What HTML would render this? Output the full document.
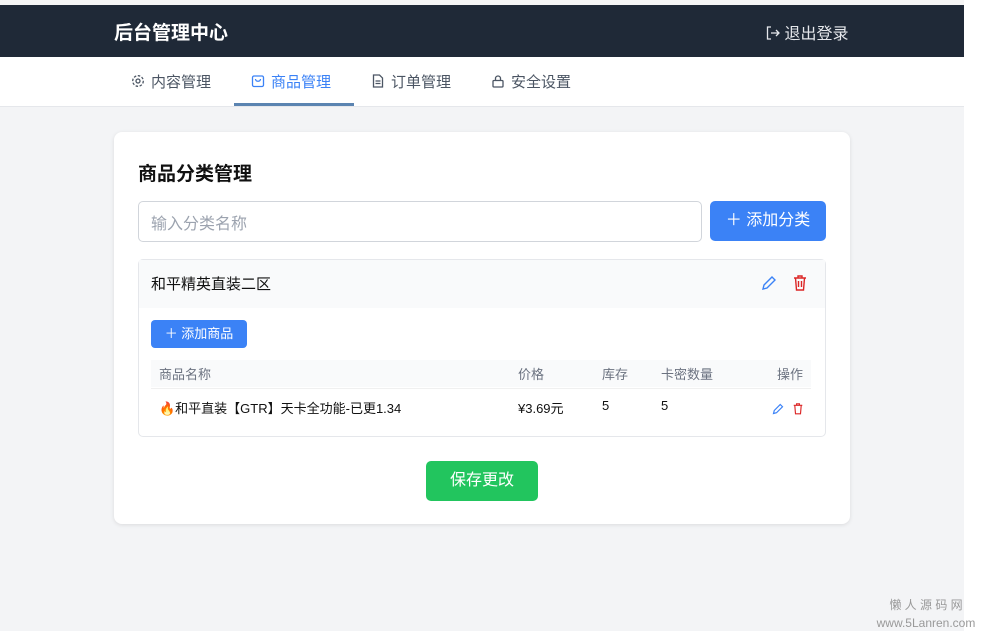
<!DOCTYPE html>
<html><head><meta charset="utf-8"><style>
*{box-sizing:border-box;margin:0;padding:0}
body{width:981px;height:631px;overflow:hidden;background:#fff;font-family:"Liberation Sans","Noto Sans CJK SC",sans-serif;position:relative}
.page{position:absolute;left:0;top:0;width:964px;height:631px;background:#f3f4f6}
.top{position:absolute;left:0;top:0;width:964px;height:5px;background:#f5f5f5}
.hdr{position:absolute;left:0;top:5px;width:964px;height:52px;background:#1f2937;color:#fff}
.hdr .t{position:absolute;left:114px;top:13px;font-size:19px;font-weight:bold}
.hdr .o{position:absolute;left:766px;top:15px;font-size:16px;color:#e5e7eb}
.nav{position:absolute;left:0;top:57px;width:964px;height:50px;background:#fff;border-bottom:1px solid #e5e7eb}
.nav div{position:absolute;top:14px;font-size:15px;color:#4b5563}
.nav svg{margin-right:6px}
.nav .a{color:#3b82f6}
.ul{position:absolute;left:234px;top:103px;width:120px;height:3px;background:#5b84b1}
.card{position:absolute;left:114px;top:132px;width:736px;height:392px;background:#fff;border-radius:8px;box-shadow:0 1px 4px rgba(0,0,0,.1)}
h2{position:absolute;left:24px;top:27px;font-size:19px;font-weight:bold;color:#111}
.inp{position:absolute;left:24px;top:69px;width:564px;height:41px;border:1px solid #d1d5db;border-radius:5px;font-size:16px;color:#9ca3af;padding:8px 12px}
.btn{position:absolute;left:596px;top:69px;width:116px;height:40px;background:#3b82f6;border-radius:5px;color:#fff;font-size:16px;text-align:center;line-height:40px}
.cat{position:absolute;left:24px;top:127px;width:688px;height:178px;border:1px solid #e5e7eb;border-radius:5px}
.ch{height:48px;background:#f9fafb;font-size:15px;color:#111;padding:13px 12px}
.ab{position:absolute;left:12px;top:60px;width:96px;height:28px;background:#3b82f6;border-radius:4px;color:#fff;font-size:13px;line-height:28px;text-align:center}
.th{position:absolute;left:12px;top:100px;width:660px;height:27px;background:#f9fafb;font-size:13px;color:#6b7280}
.th span,.tr span{position:absolute;top:4px}
.tr{position:absolute;left:12px;top:128px;width:660px;height:38px;font-size:13px;color:#111;border-top:1px solid #f0f0f0}
.tr span{top:9px}
.save{position:absolute;left:312px;top:329px;width:112px;height:40px;background:#22c55e;border-radius:5px;color:#fff;font-size:16px;text-align:center;line-height:40px}
.wm{position:absolute;left:876px;top:596px;font-size:12px;color:#999;line-height:18px;text-align:center;width:100px}
</style></head><body>
<div class="page">
<div class="top"></div>
<div class="hdr"><div class="t">后台管理中心</div>
<div class="o"><svg width="14" height="14" viewBox="0 0 14 14" style="vertical-align:-1px" fill="none" stroke="#e5e7eb" stroke-width="1.3"><path d="M5 1H1.5v12H5M5 7h8M10 4l3 3-3 3"/></svg> 退出登录</div></div>
<div class="nav">
<div style="left:131px"><svg width="14" height="14" viewBox="0 0 14 14" fill="none" stroke="#4b5563" stroke-width="1.3" style="vertical-align:-1px"><circle cx="7" cy="7" r="2"/><circle cx="7" cy="7" r="5.3" stroke-dasharray="2.5 1.6"/></svg>内容管理</div>
<div class="a" style="left:251px"><svg width="14" height="14" viewBox="0 0 14 14" fill="none" stroke="#3b82f6" stroke-width="1.3" style="vertical-align:-1px"><rect x="1.5" y="2" width="11" height="10.5" rx="1.5"/><path d="M4.5 5c0 3 5 3 5 0"/></svg>商品管理</div>
<div style="left:371px"><svg width="14" height="14" viewBox="0 0 14 14" fill="none" stroke="#4b5563" stroke-width="1.3" style="vertical-align:-1px"><path d="M2.5 1h6l3 3v9h-9zM4.5 7h5M4.5 9.5h5"/></svg>订单管理</div>
<div style="left:491px"><svg width="14" height="14" viewBox="0 0 14 14" fill="none" stroke="#4b5563" stroke-width="1.3" style="vertical-align:-1px"><rect x="2" y="6.5" width="10" height="6.5" rx="1"/><path d="M4.5 6.5V4.5a2.5 2.5 0 0 1 5 0v2"/></svg>安全设置</div>
</div>
<div class="ul"></div>
<div class="card">
<h2>商品分类管理</h2>
<div class="inp">输入分类名称</div>
<div class="btn">＋ 添加分类</div>
<div class="cat">
<div class="ch">和平精英直装二区
<svg style="position:absolute;left:622px;top:15px" width="16" height="16" viewBox="0 0 16 16" fill="none" stroke="#3b82f6" stroke-width="1.4"><path d="M11 2l3 3-8 8-4 1 1-4z"/></svg>
<svg style="position:absolute;left:654px;top:14px" width="14" height="17" viewBox="0 0 14 17" fill="none" stroke="#dc2626" stroke-width="1.4"><path d="M1 4h12M5 4V2h4v2M2.5 4l1 12h7l1-12M5.5 7v6M8.5 7v6"/></svg></div>
<div class="ab">＋ 添加商品</div>
<div class="th"><span style="left:8px">商品名称</span><span style="left:367px">价格</span><span style="left:451px">库存</span><span style="left:510px">卡密数量</span><span style="left:626px">操作</span></div>
<div class="tr"><span style="left:8px">🔥和平直装【GTR】天卡全功能-已更1.34</span><span style="left:367px">¥3.69元</span><span style="left:451px">5</span><span style="left:510px">5</span>
<svg style="position:absolute;left:621px;top:14px" width="12" height="12" viewBox="0 0 16 16" fill="none" stroke="#3b82f6" stroke-width="1.6"><path d="M11 2l3 3-8 8-4 1 1-4z"/></svg>
<svg style="position:absolute;left:642px;top:13px" width="10" height="13" viewBox="0 0 14 17" fill="none" stroke="#dc2626" stroke-width="1.6"><path d="M1 4h12M5 4V2h4v2M2.5 4l1 12h7l1-12"/></svg></div>
</div>
<div class="save">保存更改</div>
</div>
</div>
<div class="wm">懒 人 源 码 网<br>www.5Lanren.com</div>
</body></html>
